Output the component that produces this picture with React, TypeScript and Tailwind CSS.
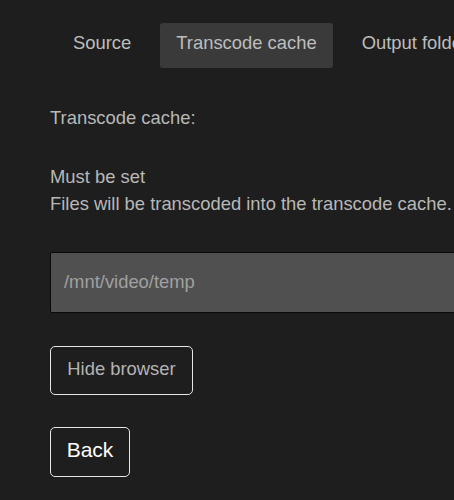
import { useState } from "react"

const tabs = ["Source", "Transcode cache", "Output folder"]

export default function App() {
  const [active, setActive] = useState(1)
  const [path, setPath] = useState("/mnt/video/temp")

  return (
    <div className="min-h-screen w-full overflow-hidden bg-[#1e1e1e] font-['Liberation_Sans',Arial,sans-serif]">
      <div className="pl-[50px]">
        <div className="mt-[23px] flex gap-[13px] pl-[7px] whitespace-nowrap">
          {tabs.map((tab, i) => (
            <button
              key={tab}
              onClick={() => setActive(i)}
              className={`flex-none h-[45px] px-4 pb-[4px] rounded-[3px] text-[18.4px] leading-none text-[#bdbdbd] ${
                active === i ? "bg-[#3a3a3a]" : "bg-transparent"
              }`}
            >
              {tab}
            </button>
          ))}
        </div>

        <p className="mt-[36px] text-[18.4px] leading-[27px] text-[#b8b8b8]">Transcode cache:</p>

        <div className="mt-8 text-[18.4px] leading-[27px] text-[#b8b8b8] whitespace-nowrap">
          <p>Must be set</p>
          <p>Files will be transcoded into the transcode cache.</p>
        </div>

        <input
          value={path}
          onChange={(e) => setPath(e.target.value)}
          className="mt-[35px] block h-[61px] w-[600px] rounded-[2px] border border-[#0a0a0a] bg-[#505050] px-[13px] pb-[2px] text-[18.4px] text-[#a0a0a0] outline-none"
        />

        <button className="mt-[33px] block h-[49px] w-[143px] pb-[3px] rounded-[5px] border border-[#e6e6e6] text-[18.4px] text-[#b4b4b4]">
          Hide browser
        </button>

        <button className="mt-8 block h-[50px] w-[80px] pb-[4px] rounded-[5px] border border-[#e6e6e6] text-[21px] text-white">
          Back
        </button>
      </div>
    </div>
  )
}
